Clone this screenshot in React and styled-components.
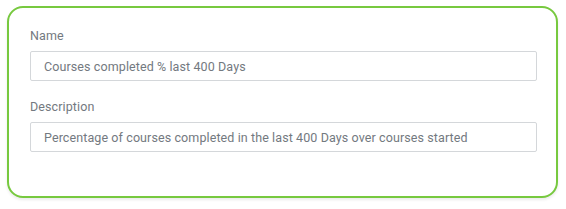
import React from 'react';
import styled, { createGlobalStyle } from 'styled-components';

const GlobalStyle = createGlobalStyle`
  body {
    margin: 0;
    background: #fff;
    font-family: Roboto, "Liberation Sans", Arial, sans-serif;
  }
`;

const Page = styled.div`
  padding: 6px 8px 10px 7px;
`;

const Card = styled.div`
  width: 551px;
  height: 192px;
  box-sizing: border-box;
  border: 2px solid #77c93f;
  border-radius: 16px;
  background: #fff;
  box-shadow: 0 2px 3px rgba(0, 0, 0, 0.08);
  padding: 20px 19px 0 21px;
  display: flex;
  flex-direction: column;
  gap: 18px;
`;

const Field = styled.div`
  display: flex;
  flex-direction: column;
  gap: 7px;
`;

const Label = styled.label`
  font-size: 12.5px;
  line-height: 16px;
  color: #737980;
  letter-spacing: 0.1px;
`;

const Input = styled.input`
  box-sizing: border-box;
  width: 100%;
  height: 30px;
  padding: 0 13px;
  border: 1px solid #d4d7da;
  border-radius: 2px;
  font-family: Roboto, "Liberation Sans", Arial, sans-serif;
  font-size: 12.5px;
  color: #737980;
  background: #fff;
  outline: none;
  letter-spacing: 0.1px;
`;

const fields = [
  { label: 'Name', value: 'Courses completed % last 400 Days' },
  {
    label: 'Description',
    value: 'Percentage of courses completed in the last 400 Days over courses started',
  },
];

const App = () => (
  <>
    <GlobalStyle />
    <Page>
      <Card>
        {fields.map((f) => (
          <Field key={f.label}>
            <Label>{f.label}</Label>
            <Input type="text" defaultValue={f.value} readOnly />
          </Field>
        ))}
      </Card>
    </Page>
  </>
);

export default App;
